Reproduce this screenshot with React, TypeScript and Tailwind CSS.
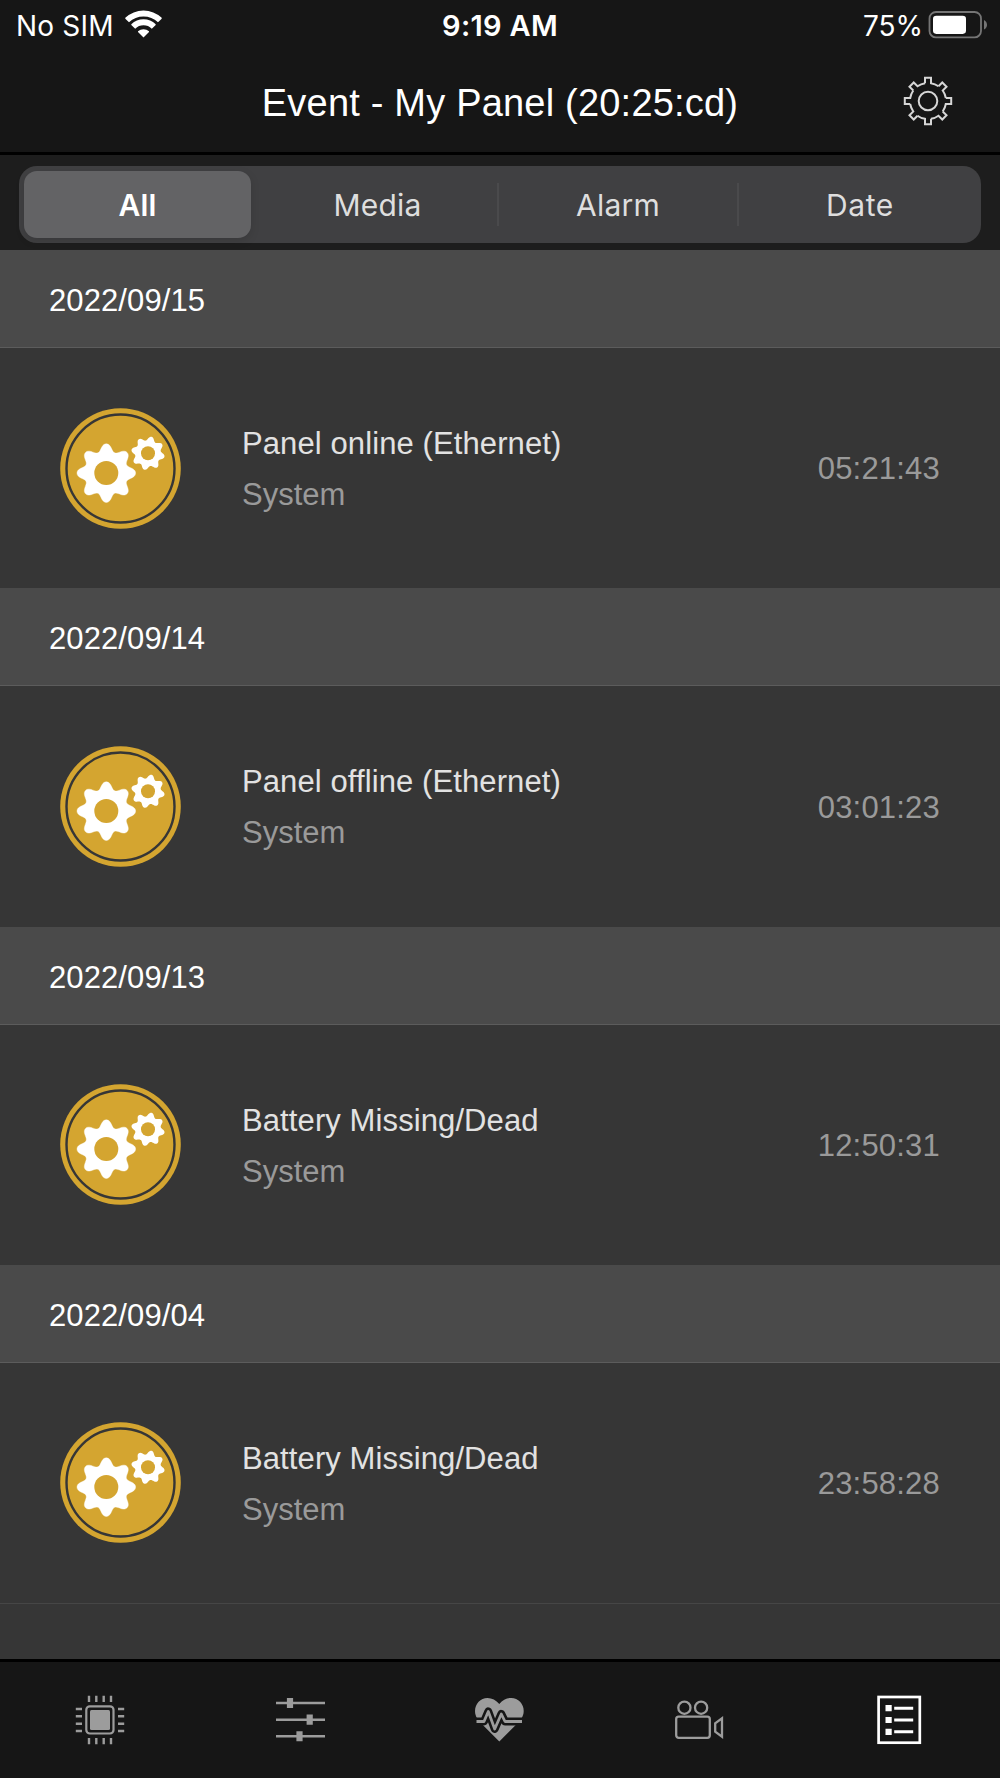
import type { ReactNode } from "react";

type EventItem = {
  date: string;
  title: string;
  source: string;
  time: string;
};

const events: EventItem[] = [
  { date: "2022/09/15", title: "Panel online (Ethernet)", source: "System", time: "05:21:43" },
  { date: "2022/09/14", title: "Panel offline (Ethernet)", source: "System", time: "03:01:23" },
  { date: "2022/09/13", title: "Battery Missing/Dead", source: "System", time: "12:50:31" },
  { date: "2022/09/04", title: "Battery Missing/Dead", source: "System", time: "23:58:28" },
];

export default function App() {
  return (
    <div className="flex h-[1778px] w-[1000px] flex-col overflow-hidden bg-[#363636] font-['Liberation_Sans',Arial,sans-serif] text-white">
      <StatusBar />
      <NavBar title="Event - My Panel (20:25:cd)" />
      <SegmentedControl />
      <main className="flex-1 overflow-hidden">
        {events.map((event) => (
          <EventSection key={event.date} {...event} />
        ))}
        <div className="h-px bg-[#464646]" />
      </main>
      <TabBar />
    </div>
  );
}

function StatusBar() {
  return (
    <header className="grid h-[50px] shrink-0 grid-cols-[1fr_auto_1fr] items-center bg-[#161616] pr-3 pl-4 font-['Inter',sans-serif] text-[28px] leading-[50px]">
      <div className="flex items-center">
        <span className="w-[109px] pt-px whitespace-nowrap tracking-[0.2px]">No SIM</span>
        <WifiIcon />
      </div>
      <div className="pt-px pr-[4px] text-center text-[29px] font-semibold tracking-[0.3px]">9:19 AM</div>
      <div className="flex items-center justify-end gap-[5px]">
        <span className="pt-px">75%</span>
        <BatteryIcon />
      </div>
    </header>
  );
}

function NavBar({ title }: { title: string }) {
  return (
    <div className="grid h-[105px] shrink-0 grid-cols-[1fr_auto_1fr] items-center border-b-[3px] border-black bg-[#161616] pr-[47px] pl-[47px]">
      <span />
      <h1 className="pt-1 text-[38px] leading-[98px] tracking-[0.2px]">{title}</h1>
      <div className="flex justify-end">
        <SettingsIcon />
      </div>
    </div>
  );
}

function SegmentedControl() {
  return (
    <div className="flex h-[95px] shrink-0 items-start bg-[#1d1d1d] px-[19px] pt-[11px]">
      <div className="grid h-[77px] w-full grid-cols-[239px_241px_240px_1fr] items-center rounded-[18px] bg-[#404042] font-['Inter',sans-serif] text-[30px] tracking-[0.2px] text-[#dedede]">
        <div className="ml-[5px] flex h-[67px] w-[227px] items-center justify-center rounded-[13px] bg-[#636365] pt-px font-semibold text-white shadow-[0_3px_10px_rgba(0,0,0,0.12)]">
          All
        </div>
        <div className="flex h-[43px] items-center justify-center border-r-2 border-[#4a4a4c] pt-0.5">Media</div>
        <div className="flex h-[43px] items-center justify-center border-r-2 border-[#4a4a4c] pt-0.5">Alarm</div>
        <div className="flex h-[43px] items-center justify-center pt-0.5 tracking-[0.6px]">Date</div>
      </div>
    </div>
  );
}

function EventSection({ date, title, source, time }: EventItem) {
  return (
    <section className="h-[338.25px]">
      <h2 className="h-[98px] border-b border-[#5c5c5c] bg-[#4a4a4a] pl-[49px] text-[31px] leading-[102px] tracking-[0.1px]">
        {date}
      </h2>
      <div className="flex h-[240px] items-center pr-[60px] pl-[60px]">
        <GearsBadge />
        <div className="ml-[61px] flex-1 pt-[3px]">
          <p className="text-[31px] leading-[50px] tracking-[0.1px] text-[#e2e2e2]">{title}</p>
          <p className="text-[31px] leading-[51px] text-[#9a9a9a]">{source}</p>
        </div>
        <time className="pt-[3px] text-[31px] tracking-[0.2px] text-[#9a9a9a]">{time}</time>
      </div>
    </section>
  );
}

function TabBar() {
  return (
    <nav className="grid h-[119px] shrink-0 grid-cols-5 items-center justify-items-center border-t-[3px] border-black bg-[#161616] text-[#9c9c9c]">
      <TabIcon>
        <rect x="11.3" y="11.3" width="27.2" height="27.2" rx="3.5" fill="none" strokeWidth="2.2" />
        <rect x="15" y="15" width="20" height="20" rx="1.5" fill="currentColor" stroke="none" />
        {[14, 21.3, 28.7, 36].map((p) => (
          <path key={p} d={`M${p} .8v6.2M${p} 43v6.2M.8 ${p}h6.2M43 ${p}h6.2`} strokeWidth="2.4" />
        ))}
      </TabIcon>
      <TabIcon>
        <path d="M1 8h49M1 24.7h49M1 41.3h49" strokeWidth="2.6" />
        <path d="M15 3v10M34.7 19.5v10.3M24.5 36.3v10" strokeWidth="6.2" />
      </TabIcon>
      <TabIcon>
        <path
          d="M24.3 9C21 5 17 3 12.5 3 5.5 3 0 8.8 0 16c0 6 3.5 9.5 8.3 14.6L24.3 46.4 40.3 30.6C45 25.5 48.7 22 48.7 16 48.7 8.8 43.2 3 36.2 3 31.6 3 27.6 5 24.3 9z"
          fill="currentColor"
          stroke="none"
        />
        <path d="M-2 26.5H9l4.3-10 6.4 17.5 6.6-15 3.7 7.5h22" fill="none" stroke="#161616" strokeWidth="8" strokeLinejoin="round" />
        <path d="M1.5 26.5H9l4.3-10 6.4 17.5 6.6-15 3.7 7.5h17" fill="none" strokeWidth="2.8" strokeLinejoin="round" />
      </TabIcon>
      <TabIcon>
        <g fill="none" strokeWidth="2.3">
          <circle cx="9.4" cy="12.7" r="6.1" />
          <circle cx="26.1" cy="12.7" r="6.1" />
          <rect x="1.2" y="21.6" width="33.6" height="21.2" rx="2.5" />
          <path d="M47 23.3v18.4l-6.800-5v-8.400z" />
        </g>
      </TabIcon>
      <TabIcon active>
        <rect x="3.6" y="2" width="41.2" height="45.700" fill="none" strokeWidth="2.7" />
        <path d="M10.500 13.200h6.200M10.500 25h6.200M10.500 36.800h6.200" strokeWidth="6.2" />
        <path d="M19.200 13.200h19M19.200 25h19M19.200 36.800h19" strokeWidth="3" />
      </TabIcon>
    </nav>
  );
}

function TabIcon({ active, children }: { active?: boolean; children: ReactNode }) {
  return (
    <svg viewBox="0 0 50 50" stroke="currentColor" className={active ? "size-[50px] text-white" : "size-[50px]"}>
      {children}
    </svg>
  );
}

function WifiIcon() {
  return (
    <svg viewBox="0 0 38 28" className="-mt-[3px] h-7 w-[38px]" fill="white">
      <path d="M.3 7.700a26.800 26.800 0 0 1 36.400 0v1L33 12.300a21.200 21.200 0 0 0-29 0L.3 8.700z" />
      <path d="M6.300 14.200a17.800 17.800 0 0 1 24.400 0v.8l-3.900 3.700a12 12 0 0 0-16.600 0l-3.900-3.700z" />
      <path d="M13 21.300a8.500 8.500 0 0 1 11 0v.8l-5.500 5.500-5.500-5.500z" />
    </svg>
  );
}

function BatteryIcon() {
  return (
    <svg viewBox="0 0 60 28" className="-mt-px h-7 w-[60px]">
      <rect x="1.5" y="1" width="51.500" height="25.400" rx="6.500" fill="none" stroke="#757575" strokeWidth="1.800" />
      <rect x="5" y="4.700" width="33" height="18.200" rx="3.300" fill="white" />
      <path d="M56 9c4 2.200 4 7.400 0 9.600z" fill="#757575" />
    </svg>
  );
}

function SettingsIcon() {
  // one tooth with the rim segment that follows it, repeated every 45 degrees
  const tooth = "M-3-17.800V-23.200H3V-17.800A18 18 0 0 1 10.500-14.700";
  return (
    <svg viewBox="-25 -25 50 50" className="size-[50px]" fill="none" stroke="#d6d6d6" strokeWidth="2">
      {[0, 45, 90, 135, 180, 225, 270, 315].map((angle) => (
        <path key={angle} d={tooth} transform={`rotate(${angle})`} />
      ))}
      <circle r="9.3" />
    </svg>
  );
}

function gearPath(cx: number, cy: number, inner: number, outer: number, turn: number) {
  const mid = (inner + outer) / 2;
  const amp = (outer - inner) / 2;
  const points: string[] = [];
  for (let deg = 0; deg < 360; deg += 2.5) {
    const a = (deg * Math.PI) / 180;
    const r = mid + (amp * Math.tanh(0.7 * Math.cos(8 * a))) / Math.tanh(0.7);
    const t = a + (turn * Math.PI) / 180;
    points.push(`${(cx + r * Math.cos(t)).toFixed(2)} ${(cy + r * Math.sin(t)).toFixed(2)}`);
  }
  return `M${points.join("L")}Z`;
}

function GearsBadge() {
  return (
    <svg viewBox="0 0 121 121" className="size-[121px] shrink-0">
      <circle cx="60.5" cy="60.5" r="60.3" fill="#d4a530" />
      <circle cx="60.5" cy="60.5" r="54" fill="none" stroke="#363636" strokeWidth="2.4" />
      <path d={gearPath(46.3, 65.1, 21.9, 29.3, 0)} fill="white" stroke="white" strokeWidth=".4" />
      <circle cx="46.3" cy="65.1" r="12" fill="#d4a530" />
      <path d={gearPath(88, 45.3, 12.9, 16.8, 12)} fill="white" />
      <circle cx="88" cy="45.3" r="7" fill="#d4a530" />
    </svg>
  );
}
